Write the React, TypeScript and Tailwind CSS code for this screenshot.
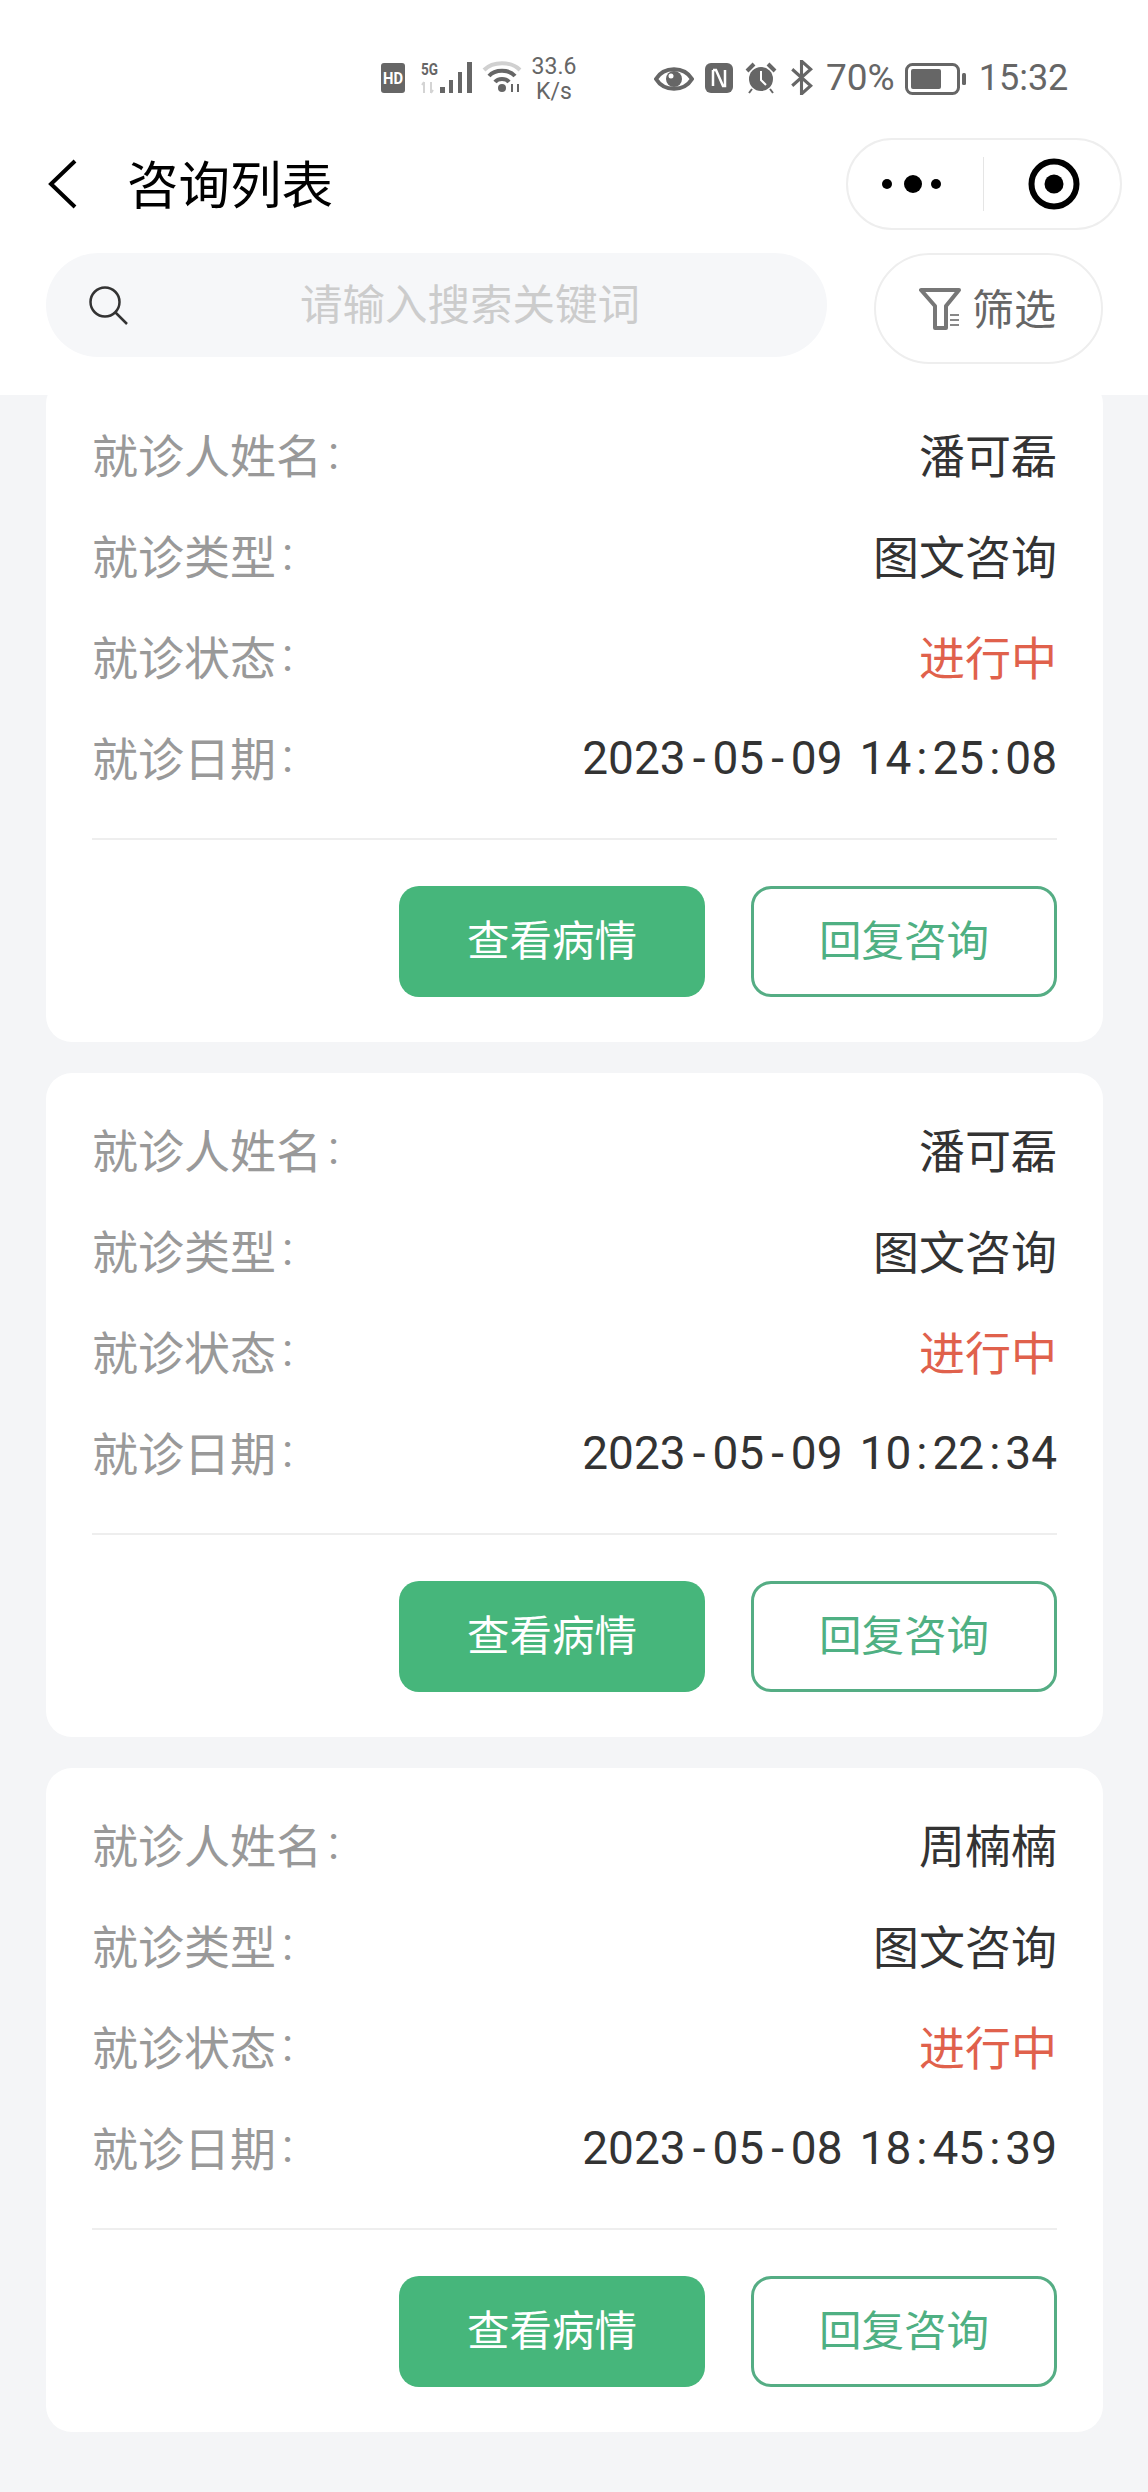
import React from "react";

const font = { fontFamily: '"Noto Sans CJK SC", "Noto Sans", sans-serif' };
const latin = { fontFamily: 'Roboto, "Noto Sans", sans-serif' };

function StatusBar() {
  return (
    <div className="flex h-[138px] items-start pl-[381px] pt-[60px] text-[#666666]">
      <svg width="24" height="30" viewBox="0 0 24 30" className="mt-[3px]">
        <rect width="24" height="30" rx="3" fill="#666" />
        <text x="12" y="21" textAnchor="middle" fontSize="16" fontWeight="700" fill="#fff" fontFamily="Roboto" textLength="20" lengthAdjust="spacingAndGlyphs">HD</text>
      </svg>
      <svg width="52" height="40" viewBox="0 -6 52 40" className="ml-[16px] mt-[-4px]">
        <text x="0" y="13" fontSize="16" fontWeight="700" fill="#666" fontFamily="Roboto" textLength="17" lengthAdjust="spacingAndGlyphs">5G</text>
        <path d="M3 20v11M1 23l2-3M10 31V20M12 28l-2 3" stroke="#d4d4d4" strokeWidth="2" fill="none" />
        <rect x="19" y="25" width="5" height="6" fill="#666" />
        <rect x="28" y="18" width="4" height="13" fill="#666" />
        <rect x="37" y="10" width="4" height="21" fill="#666" />
        <rect x="46" y="0" width="5" height="31" fill="#666" />
      </svg>
      <svg width="40" height="34" viewBox="0 0 40 34" className="ml-[9px] mt-[0px]" fill="none">
        <path d="M2 10C11 1 29 1 38 10" stroke="#d0d0d0" strokeWidth="4" />
        <path d="M7 16C13 9 27 9 33 16" stroke="#666" strokeWidth="4" />
        <path d="M13 22C16 18 24 18 27 22" stroke="#666" strokeWidth="4" />
        <circle cx="20" cy="28" r="4" fill="#666" />
        <path d="M30 24v8M36 24v8" stroke="#666" strokeWidth="2" />
      </svg>
      <div className="ml-[8px] mt-[-6px] flex w-[48px] flex-col items-center text-[23px] leading-[25px]" style={latin}>
        <span>33.6</span>
        <span>K/s</span>
      </div>
      <svg width="40" height="26" viewBox="0 0 40 26" className="ml-[76px] mt-[6px]" fill="none">
        <path d="M2 13C10 0 30 0 38 13C30 26 10 26 2 13Z" stroke="#666" strokeWidth="4" />
        <circle cx="20" cy="13" r="8" fill="#666" />
        <circle cx="17" cy="10" r="2.5" fill="#fff" />
      </svg>
      <svg width="28" height="30" viewBox="0 0 28 30" className="ml-[11px] mt-[3px]" fill="none">
        <rect width="28" height="30" rx="6" fill="#666" />
        <path d="M8 7v16M8 7h3l7 16h2V7" stroke="#fff" strokeWidth="2.5" />
      </svg>
      <svg width="32" height="32" viewBox="0 0 32 32" className="ml-[12px] mt-[2px]" fill="none">
        <circle cx="16" cy="17" r="12" fill="#666" />
        <path d="M16 9v9l5 5" stroke="#fff" strokeWidth="2" />
        <path d="M2 9l7-7M30 9l-7-7" stroke="#666" strokeWidth="4" />
        <path d="M7 27l-3 4M25 27l3 4" stroke="#666" strokeWidth="2" />
      </svg>
      <svg width="23" height="35" viewBox="0 0 22 34" className="ml-[13px] mt-[0px]" fill="none">
        <path d="M2 9L20 25L11 33V1L20 9L2 25" stroke="#666" strokeWidth="3" />
      </svg>
      <span className="ml-[13px] mt-[-4px] text-[37px] leading-[44px]" style={latin}>70%</span>
      <svg width="62" height="32" viewBox="0 0 62 32" className="ml-[10px] mt-[3px]" fill="none">
        <rect x="1.5" y="1.5" width="52" height="29" rx="6" stroke="#666" strokeWidth="3" />
        <rect x="6" y="6" width="30" height="20" rx="2" fill="#666" />
        <rect x="57" y="10" width="4" height="12" rx="1.5" fill="#666" />
      </svg>
      <span className="ml-[12px] mt-[-4px] text-[36px] leading-[44px]" style={latin}>15:32</span>
    </div>
  );
}

function NavBar() {
  return (
    <div className="flex h-[92px] items-center pl-[48px] pr-[26px]">
      <svg width="30" height="50" viewBox="0 0 30 50" fill="none">
        <path d="M27 2L3 25L27 48" stroke="#000" strokeWidth="4" />
      </svg>
      <span className="mb-[4px] ml-[49px] text-[51.5px] leading-none text-black">咨询列表</span>
      <div className="ml-auto flex h-[92px] w-[276px] items-center rounded-full border-2 border-[#eeeeee] bg-white">
        <svg width="135" height="20" viewBox="0 0 135 20" className="shrink-0">
          <circle cx="39" cy="10" r="5" fill="#000" />
          <circle cx="65" cy="10" r="9" fill="#000" />
          <circle cx="88" cy="10" r="5" fill="#000" />
        </svg>
        <div className="h-[54px] w-[1px] bg-[#e5e5e5]" />
        <svg width="52" height="52" viewBox="0 0 52 52" className="ml-[44px] shrink-0" fill="none">
          <circle cx="26" cy="26" r="22.5" stroke="#000" strokeWidth="6" />
          <circle cx="26" cy="26" r="9.5" fill="#000" />
        </svg>
      </div>
    </div>
  );
}

function SearchRow() {
  return (
    <div className="mt-[23px] flex items-start pl-[46px]">
      <div className="flex h-[104px] w-[781px] shrink-0 items-center rounded-full bg-[#f6f7f9] pl-[42px]">
        <svg width="40" height="40" viewBox="0 0 40 40" fill="none" className="shrink-0">
          <circle cx="17" cy="17" r="14.5" stroke="#333" strokeWidth="2.5" />
          <path d="M27 27L39 39" stroke="#333" strokeWidth="2.5" />
        </svg>
        <span className="mb-[6px] ml-[172px] text-[42.5px] leading-none text-[#cccccc]">请输入搜索关键词</span>
      </div>
      <div className="ml-[47px] flex h-[111px] w-[229px] shrink-0 items-center rounded-full border-2 border-[#eeeeee] pl-[43px]">
        <svg width="42" height="44" viewBox="0 0 42 44" fill="none" className="shrink-0">
          <path d="M2 3H40L27 19V41H16V19Z" stroke="#777" strokeWidth="4" strokeLinejoin="round" />
          <path d="M31 28h9M31 33h9M31 38h9" stroke="#888" strokeWidth="2" />
        </svg>
        <span className="mb-[4px] ml-[11px] text-[42px] leading-none text-[#666666]">筛选</span>
      </div>
    </div>
  );
}

function DateText({ value }: { value: string }) {
  const [day, time] = value.split(" ");
  const [y, m, d] = day.split("-");
  const [h, mi, s] = time.split(":");
  return (
    <span className="mt-[5px] flex text-[46px] leading-none text-[#333333]" style={latin}>
      <span>{y}</span>
      <span className="mx-[7px]">-</span>
      <span>{m}</span>
      <span className="mx-[7px]">-</span>
      <span>{d}</span>
      <span className="w-[17px]"> </span>
      <span>{h}</span>
      <span className="mx-[5px]">:</span>
      <span>{mi}</span>
      <span className="mx-[5px]">:</span>
      <span>{s}</span>
    </span>
  );
}

function Row({ label, value, className, date }: { label: string; value: string; className?: string; date?: boolean }) {
  return (
    <div className="flex h-[101px] items-center justify-between">
      <span className="mt-[1px] flex items-center text-[46px] leading-none text-[#999999]">
        {label}
        <span className="ml-[6px]" style={latin}>:</span>
      </span>
      {date ? <DateText value={value} /> : <span className={`text-[46px] leading-none ${className}`}>{value}</span>}
    </div>
  );
}

function Card({ name, date, first }: { name: string; date: string; first?: boolean }) {
  return (
    <div className={`h-[664px] rounded-[26px] bg-white pl-[46px] pr-[46px] pt-[24px] ${first ? "" : "mt-[31px]"}`}>
      <Row label="就诊人姓名" value={name} className="text-[#333333]" />
      <Row label="就诊类型" value="图文咨询" className="text-[#333333]" />
      <Row label="就诊状态" value="进行中" className="text-[#e0614c]" />
      <Row label="就诊日期" value={date} date />
      <div className="mt-[32px] h-[2px] bg-[#eeeeee]" />
      <div className="mt-[46px] flex justify-end gap-[46px]">
        <div className="flex h-[111px] w-[306px] items-center justify-center rounded-[20px] bg-[#46b67b] pb-[7px] text-[42.5px] leading-none text-white">查看病情</div>
        <div className="flex h-[111px] w-[306px] items-center justify-center rounded-[20px] border-[3px] border-[#55ad84] bg-white pb-[7px] text-[42.5px] leading-none text-[#4fb083]">回复咨询</div>
      </div>
    </div>
  );
}

export default function App() {
  return (
    <div className="h-[2492px] w-[1148px] overflow-hidden bg-[#f4f5f7]" style={font}>
      <div className="relative z-10 h-[395px] bg-white">
        <StatusBar />
        <NavBar />
        <SearchRow />
      </div>
      <div className="mt-[-17px] pl-[46px] pr-[45px]">
        <Card first name="潘可磊" date="2023-05-09 14:25:08" />
        <Card name="潘可磊" date="2023-05-09 10:22:34" />
        <Card name="周楠楠" date="2023-05-08 18:45:39" />
      </div>
    </div>
  );
}
